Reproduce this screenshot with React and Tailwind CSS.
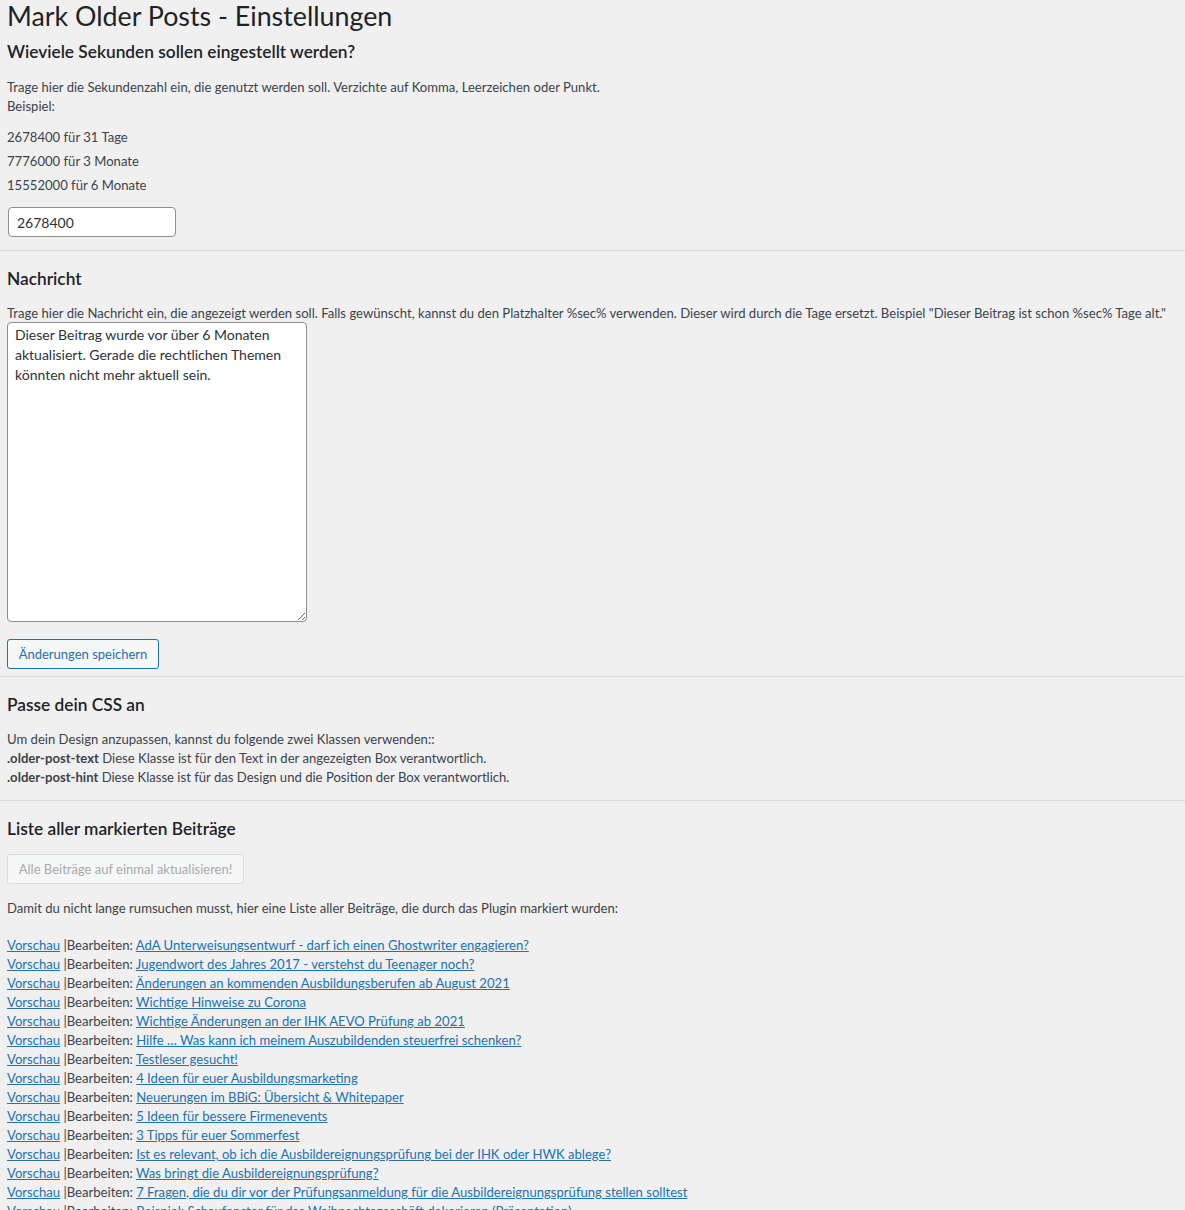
import React from "react";

const posts = [
  "AdA Unterweisungsentwurf - darf ich einen Ghostwriter engagieren?",
  "Jugendwort des Jahres 2017 - verstehst du Teenager noch?",
  "Änderungen an kommenden Ausbildungsberufen ab August 2021",
  "Wichtige Hinweise zu Corona",
  "Wichtige Änderungen an der IHK AEVO Prüfung ab 2021",
  "Hilfe … Was kann ich meinem Auszubildenden steuerfrei schenken?",
  "Testleser gesucht!",
  "4 Ideen für euer Ausbildungsmarketing",
  "Neuerungen im BBiG: Übersicht & Whitepaper",
  "5 Ideen für bessere Firmenevents",
  "3 Tipps für euer Sommerfest",
  "Ist es relevant, ob ich die Ausbildereignungsprüfung bei der IHK oder HWK ablege?",
  "Was bringt die Ausbildereignungsprüfung?",
  "7 Fragen, die du dir vor der Prüfungsanmeldung für die Ausbildereignungsprüfung stellen solltest",
  "Beispiel: Schaufenster für das Weihnachtsgeschäft dekorieren (Präsentation)",
];

function H2({ children, className = "" }) {
  return (
    <h2 className={"text-[17.3px] leading-[24px] font-semibold text-[#1d2327] " + className}>
      {children}
    </h2>
  );
}

function Rule({ className = "" }) {
  return <div className={"h-px bg-[#dcdcde] -ml-[7px] " + className} />;
}

export default function App() {
  return (
    <div
      className="min-h-screen bg-[#f0f0f1] pl-[7px] text-[13.1px] text-[#3c434a] overflow-hidden"
      style={{ fontFamily: "Lato, 'Liberation Sans', sans-serif" }}
    >
      <h1 className="text-[26.8px] leading-[32px] font-normal text-[#1d2327]">
        Mark Older Posts - Einstellungen
      </h1>

      <H2 className="mt-[8px]">Wieviele Sekunden sollen eingestellt werden?</H2>

      <div className="mt-[14px] leading-[19px]">
        <div>Trage hier die Sekundenzahl ein, die genutzt werden soll. Verzichte auf Komma, Leerzeichen oder Punkt.</div>
        <div>Beispiel:</div>
      </div>
      <div className="mt-[12px] flex flex-col gap-[5px] leading-[19px]">
        <div>2678400 für 31 Tage</div>
        <div>7776000 für 3 Monate</div>
        <div>15552000 für 6 Monate</div>
      </div>

      <input
        type="text"
        defaultValue="2678400"
        className="mt-[12px] ml-[1px] block h-[30px] w-[168px] rounded-[4px] border border-[#8c8f94] bg-white px-[8px] text-[14px] text-[#2c3338] outline-none"
        style={{ fontFamily: "Lato, 'Liberation Sans', sans-serif" }}
      />

      <Rule className="mt-[13px]" />

      <H2 className="mt-[16px]">Nachricht</H2>
      <div className="mt-[13px] leading-[18px] whitespace-nowrap">
        Trage hier die Nachricht ein, die angezeigt werden soll. Falls gewünscht, kannst du den Platzhalter %sec% verwenden. Dieser wird durch die Tage ersetzt. Beispiel "Dieser Beitrag ist schon %sec% Tage alt."
      </div>
      <textarea
        defaultValue="Dieser Beitrag wurde vor über 6 Monaten aktualisiert. Gerade die rechtlichen Themen könnten nicht mehr aktuell sein."
        className="block h-[300px] w-[300px] rounded-[4px] border border-[#8c8f94] bg-white px-[7px] pt-[2px] text-[14px] leading-[20px] text-[#2c3338] outline-none"
        style={{ fontFamily: "Lato, 'Liberation Sans', sans-serif" }}
      />

      <button
        type="button"
        className="mt-[17px] flex h-[30px] w-[152px] items-center justify-center rounded-[3px] border border-[#2271b1] bg-[#f6f7f7] pt-px text-[13px] text-[#2271b1]"
      >
        Änderungen speichern
      </button>

      <Rule className="mt-[7px]" />

      <H2 className="mt-[16px]">Passe dein CSS an</H2>
      <div className="mt-[13px] leading-[19px]">
        <div>Um dein Design anzupassen, kannst du folgende zwei Klassen verwenden::</div>
        <div>
          <span className="font-bold">.older-post-text</span> Diese Klasse ist für den Text in der angezeigten Box verantwortlich.
        </div>
        <div>
          <span className="font-bold">.older-post-hint</span> Diese Klasse ist für das Design und die Position der Box verantwortlich.
        </div>
      </div>

      <Rule className="mt-[13px]" />

      <H2 className="mt-[16px]">Liste aller markierten Beiträge</H2>
      <button
        type="button"
        disabled
        className="mt-[13px] flex h-[30px] w-[237px] items-center justify-center rounded-[3px] border border-[#dcdcde] bg-[#f6f7f7] pt-px text-[13px] text-[#a7aaad]"
      >
        Alle Beiträge auf einmal aktualisieren!
      </button>

      <div className="mt-[15px] leading-[19px]">
        Damit du nicht lange rumsuchen musst, hier eine Liste aller Beiträge, die durch das Plugin markiert wurden:
      </div>

      <div className="mt-[18px] flex flex-col leading-[19px]">
        {posts.map((p) => (
          <div key={p} className="whitespace-nowrap">
            <a href="#" className="text-[#2271b1] underline">Vorschau</a>
            {" |Bearbeiten: "}
            <a href="#" className="text-[#2271b1] underline">{p}</a>
          </div>
        ))}
      </div>
    </div>
  );
}
